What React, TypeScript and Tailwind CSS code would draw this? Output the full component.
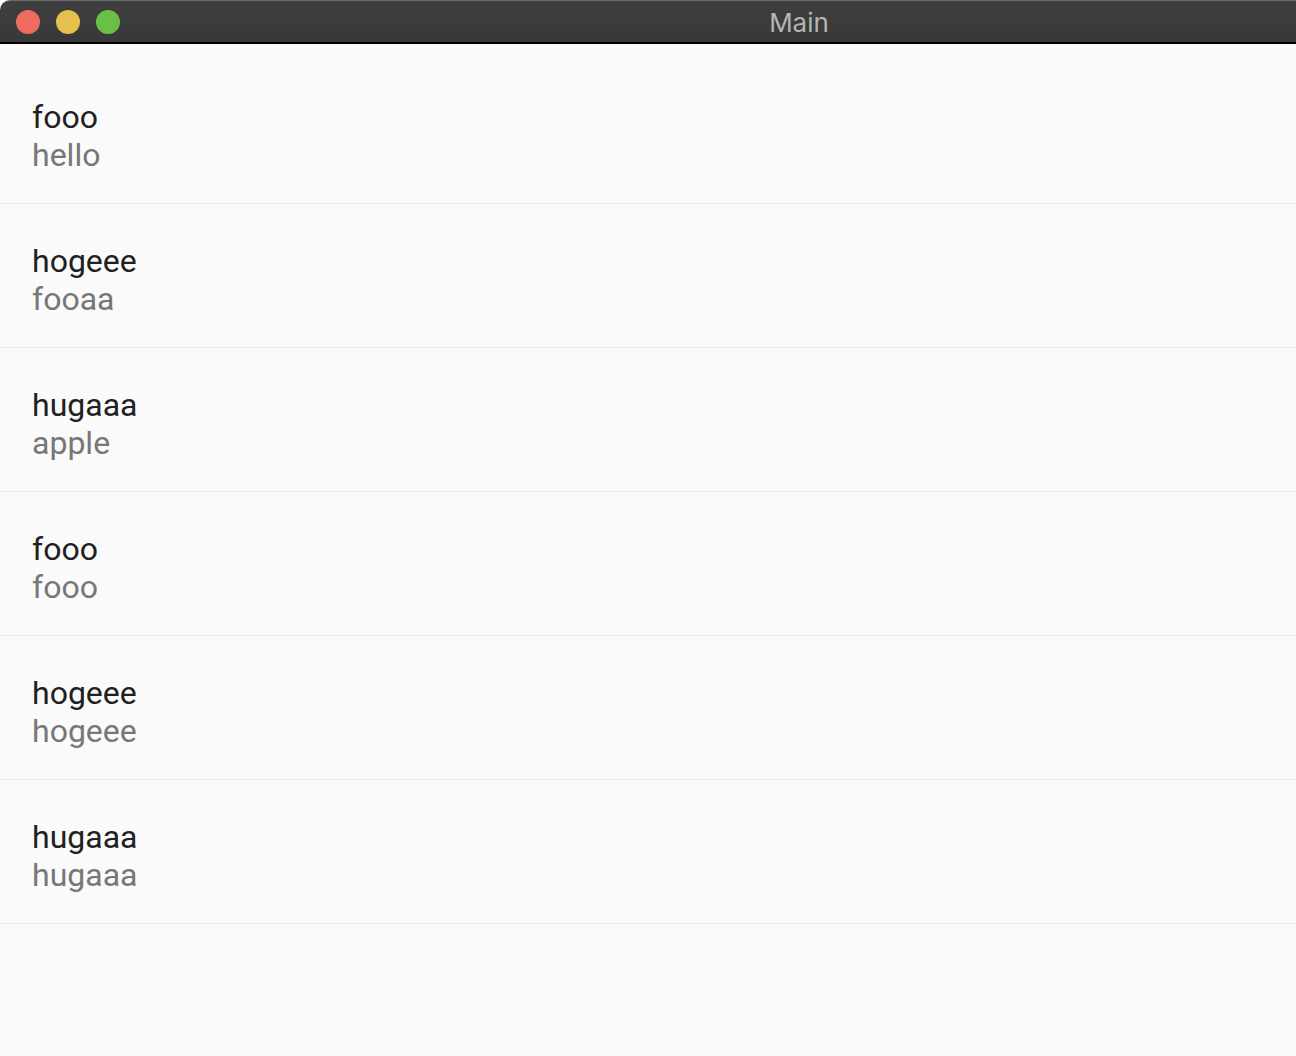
import React from "react";

const items = [
  ["fooo", "hello"],
  ["hogeee", "fooaa"],
  ["hugaaa", "apple"],
  ["fooo", "fooo"],
  ["hogeee", "hogeee"],
  ["hugaaa", "hugaaa"],
];

export default function App() {
  return (
    <div className="w-[1296px] h-[1056px] bg-white overflow-hidden flex flex-col" style={{ fontFamily: "Roboto, 'Noto Sans', sans-serif" }}>
      <div className="h-[44px] shrink-0 flex items-center rounded-tl-[10px] bg-gradient-to-b from-[#3f3f3f] to-[#383838] border-t border-t-[#6a6a6a] border-b-2 border-b-black relative">
        <div className="flex items-center gap-4 pl-4 pt-[1px]">
          <div className="w-6 h-6 rounded-full bg-[#ee6b60]" />
          <div className="w-6 h-6 rounded-full bg-[#e4c14f]" />
          <div className="w-6 h-6 rounded-full bg-[#6bbf47]" />
        </div>
        <div className="absolute inset-0 flex items-center justify-center pl-[302px] pt-[2px] text-[26px] text-[#b4b4b4]" style={{ fontFamily: "Inter, 'Noto Sans', sans-serif" }}>
          Main
        </div>
      </div>
      <div className="flex-1 bg-[#fafafa] pt-4">
        {items.map(([p, s], i) => (
          <div key={i} className="pl-8 pt-[38px] pb-[29px] border-b border-[#e9e9e9]">
            <div className="text-[32px] leading-[38px] text-[#212121]">{p}</div>
            <div className="text-[32px] leading-[38px] text-[#777777]">{s}</div>
          </div>
        ))}
      </div>
    </div>
  );
}
